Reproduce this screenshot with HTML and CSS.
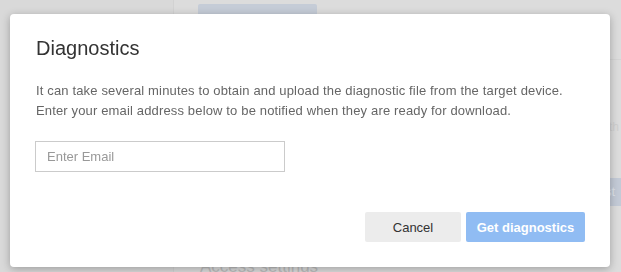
FILE: index.html
```html
<!DOCTYPE html>
<html>
<head>
<meta charset="utf-8">
<link rel="stylesheet" href="styles.css">
</head>
<body>
<div class="page">
  <aside class="sidebar"></aside>
  <main class="main">
    <div class="top-chip"></div>
    <div class="main-body">
      <div class="content"></div>
      <div class="right-col">
        <div class="rule"></div>
        <span class="faint-th">th</span>
        <div class="side-btn">st</div>
      </div>
    </div>
    <div class="faint-label">Access settings</div>
  </main>
</div>
<div class="backdrop">
  <div class="modal">
    <h1 class="modal-title">Diagnostics</h1>
    <p class="modal-text">It can take several minutes to obtain and upload the diagnostic file from the target device.<br>Enter your email address below to be notified when they are ready for download.</p>
    <input class="email" type="text" placeholder="Enter Email">
    <div class="actions">
      <button class="btn btn-cancel">Cancel</button>
      <button class="btn btn-primary">Get diagnostics</button>
    </div>
  </div>
</div>
</body>
</html>
```
FILE: styles.css
```css
html, body {
  margin: 0;
  padding: 0;
  width: 621px;
  height: 272px;
  overflow: hidden;
  font-family: "Liberation Sans", Arial, sans-serif;
}
.page {
  display: flex;
  width: 621px;
  height: 272px;
  background: #dcdcdc;
}
.sidebar {
  width: 173px;
  background: #d9d9d9;
  border-right: 1px solid #d2d2d2;
}
.main {
  flex: 1;
  display: flex;
  flex-direction: column;
  padding-left: 24px;
}
.top-chip {
  margin-top: 4px;
  width: 119px;
  height: 20px;
  background: #c5ccd7;
  border-radius: 2px;
}
.main-body {
  flex: 1;
  display: flex;
}
.content { flex: 1; }
.right-col {
  width: 12px;
  display: flex;
  flex-direction: column;
  padding-top: 35px;
}
.rule { height: 1px; background: #d4d4d4; }
.faint-th { margin-top: 60px; font-size: 12px; color: #cfcfcf; }
.side-btn {
  margin-top: 44px;
  height: 28px;
  background: #c3cad6;
  color: #dde2ea;
  font-size: 13px;
  line-height: 28px;
  text-indent: -4px;
}
.faint-label {
  height: 12px;
  font-size: 17px;
  color: #bdbdbd;
  line-height: 14px;
  padding-left: 2px;
}
.backdrop {
  position: fixed;
  inset: 0;
}
.modal {
  position: absolute;
  left: 10px;
  top: 14px;
  width: 600px;
  height: 253px;
  box-sizing: border-box;
  background: #fff;
  border-radius: 4px;
  box-shadow: 0 2px 8px rgba(0,0,0,0.28);
  padding: 20px 25px 25px 25px;
  display: flex;
  flex-direction: column;
}
.modal-title {
  margin: 0;
  font-size: 20px;
  font-weight: 400;
  color: #333;
  line-height: 28px;
  padding-left: 1px;
}
.modal-text {
  margin: 19px 0 0 0;
  font-size: 13px;
  letter-spacing: 0.15px;
  line-height: 20px;
  color: #666;
  padding-left: 1px;
}
.email {
  margin-top: 20px;
  width: 250px;
  height: 31px;
  box-sizing: border-box;
  border: 1px solid #cbcbcb;
  border-radius: 0;
  padding: 0 11px;
  font-family: "Liberation Sans", Arial, sans-serif;
  font-size: 13px;
  color: #333;
  outline: none;
}
.email::placeholder { color: #999; }
.actions {
  margin-top: auto;
  display: flex;
  justify-content: flex-end;
  gap: 5px;
}
.btn {
  height: 30px;
  border: none;
  border-radius: 2px;
  font-family: "Liberation Sans", Arial, sans-serif;
  font-size: 13px;
  padding: 0;
}
.btn-cancel {
  width: 96px;
  background: #ececec;
  color: #333;
}
.btn-primary {
  width: 119px;
  background: #90bcf3;
  color: #fff;
  font-weight: 700;
}
```
